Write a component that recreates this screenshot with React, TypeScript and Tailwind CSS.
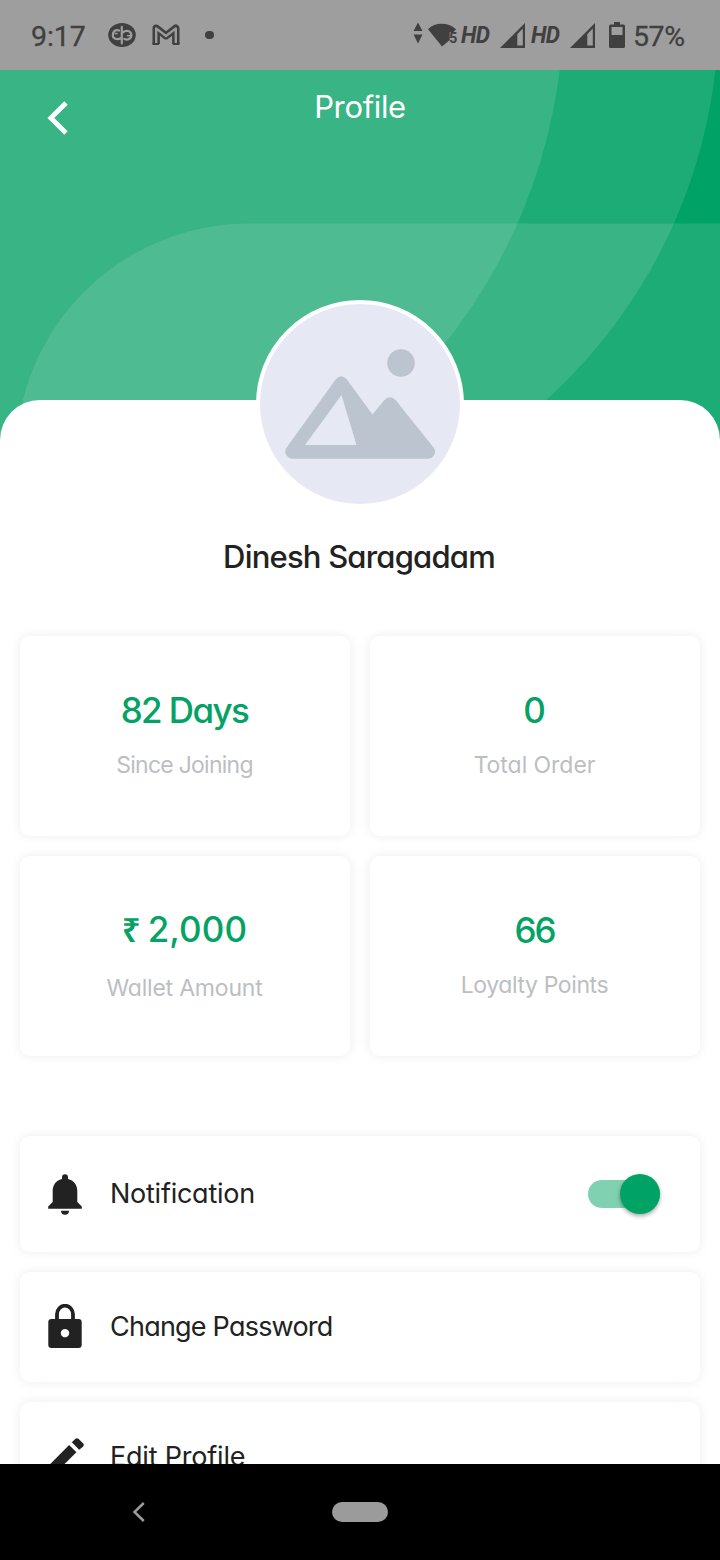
import type { ReactNode } from "react";

const FONT = "font-['Inter','Noto_Sans',sans-serif] [font-feature-settings:'cv11'_1,'calt'_0]";

function StatusBar() {
  return (
    <header className="flex h-[70px] shrink-0 items-center bg-[#9e9e9e] pl-[31px] pr-[35px] font-['Roboto',sans-serif] text-[#404040]">
      <span className="w-[77px] pt-[4px] text-[28.500px] leading-[66px] tracking-[-0.100px] [-webkit-text-stroke:0.300px_#404040]">9:17</span>
      <svg width="28" height="24" viewBox="0 0 28 24" aria-hidden="true">
        <ellipse cx="14" cy="12" rx="13.8" ry="12" fill="#404040" />
        <g fill="none" stroke="#9e9e9e" strokeWidth="2.200" strokeLinecap="round">
          <path d="M13.800 3.800V20.500" />
          <path d="M11 7.500C7.500 6.200 4.800 8.500 4.800 12c0 3.800 4 5.200 8 3.200" />
          <path d="M14.500 9.500C18.500 6.500 23 7.800 23.300 11.800c.2 4-3.600 5.600-7 4.200" />
          <path d="M19.500 12.800H22.500M7 10.500H9" strokeWidth="1.600" />
        </g>
      </svg>
      <svg className="ml-[15px]" width="30" height="24" viewBox="0 0 30 24" fill="none" aria-hidden="true">
        <path d="M5.200 21V5.200L15 12.800 24.800 5.200V21" stroke="#404040" strokeWidth="7.400" strokeLinejoin="round" />
        <path d="M1.500 19V21.500Q1.500 22 2.500 22H8V20M21.900 20V22H27.500Q28.500 22 28.500 21V19" fill="#404040" />
        <path d="M5.200 20V5.400L15 13 24.800 5.400V20" stroke="#9a9a9a" strokeWidth="2.400" strokeLinejoin="round" />
      </svg>
      <span className="ml-[24px] size-[8.500px] rounded-full bg-[#404040]" />
      <div className="ml-auto flex items-center">
        <svg width="44" height="28" viewBox="0 0 44 28" fill="#404040" aria-hidden="true">
          <path d="M5 1.500 9.500 10H.5ZM.5 13.500h9L5 22.500Z" />
          <path d="M15 8.200C22 1 35 1 43 8.200L40.500 11h-3.800v8L29 25.500Z" />
        </svg>
        <span className="-ml-[8px] mt-[8px] w-[10px] text-[14.500px] font-bold leading-[18px]">5</span>
        <span className="ml-[2px] w-[39px] origin-left scale-x-[0.940] text-[24px] font-bold italic leading-[28px] tracking-[-0.800px]">HD</span>
        <Signal />
        <span className="ml-[5px] w-[39px] origin-left scale-x-[0.940] text-[24px] font-bold italic leading-[28px] tracking-[-0.800px]">HD</span>
        <Signal />
        <svg className="ml-[13px]" width="16" height="26" viewBox="0 0 16 26" aria-hidden="true">
          <path d="M5 0h6v2.500h3.500Q16 2.500 16 4v20.500q0 1.500-1.500 1.500h-13Q0 26 0 24.500V4Q0 2.500 1.500 2.500H5Z" fill="#404040" />
          <path d="M2.500 5h11v8h-11Z" fill="#9e9e9e" />
        </svg>
        <span className="ml-[8px] w-[52px] pt-[4px] text-[28.500px] leading-[66px] tracking-[-0.400px] [-webkit-text-stroke:0.300px_#404040]">57%</span>
      </div>
    </header>
  );
}

function Signal() {
  return (
    <svg width="26" height="25" viewBox="0 0 26 25" aria-hidden="true">
      <path d="M25 0v25H0Z" fill="#404040" />
      <path d="M22.800 5.500v17h-5.500V11.200Z" fill="#9e9e9e" />
    </svg>
  );
}

function HeaderArt() {
  return (
    <svg className="absolute inset-x-0 top-0" width="720" height="370" viewBox="0 70 720 370" aria-hidden="true">
      <rect y="70" width="720" height="370" fill="#00a365" />
      <g fill="#eee" fillOpacity=".125">
        <circle cx="18" cy="3.500" r="545.800" />
        <path d="M0 70H715.500A525 525 0 0 1 510 430V440H0Z" />
        <path d="M720 223.500H249A233 233 0 0 0 16 456.500H720Z" />
      </g>
    </svg>
  );
}

function Avatar() {
  return (
    <div className="size-[208px] rounded-full border-4 border-white bg-[#e6e9f3]">
      <svg width="200" height="200" viewBox="260 304 200 200" aria-hidden="true">
        <circle cx="401" cy="363" r="13.800" fill="#bcc4cf" />
        <path
          d="M336 379Q341 373.500 346.500 379L372.500 414.500 384 400.500Q390 394 396 400.500L433.500 447.500Q437 452 433.500 456 431.500 458.700 428 458.700H292.500Q289 458.700 287 456 283.500 451.500 287 447ZM341.500 395 305 445H356.500Z"
          fill="#bcc4cf"
          fillRule="evenodd"
        />
      </svg>
    </div>
  );
}

function StatCard({ children, label, pad, gap, tracking }: { children: ReactNode; label: string; pad: string; gap: string; tracking: string }) {
  return (
    <div className={`flex h-[200px] flex-col items-center rounded-[10px] bg-white pr-[1px] shadow-[0_0_12px_rgba(0,0,0,0.08)] ${pad}`}>
      <div className="whitespace-nowrap text-[35px] font-medium leading-[44px] text-[#05a266]">{children}</div>
      <div className={`whitespace-nowrap text-[23px] leading-[30px] text-[#bcbec2] ${gap} ${tracking}`}>{label}</div>
    </div>
  );
}

function Row({ icon, label, height, tracking, children }: { icon: ReactNode; label: string; height: string; tracking: string; children?: ReactNode }) {
  return (
    <div className={`flex shrink-0 items-center rounded-[10px] bg-white pl-[26px] pr-[40px] shadow-[0_0_12px_rgba(0,0,0,0.08)] ${height}`}>
      {icon}
      <span className={`ml-[26px] whitespace-nowrap text-[27px] leading-[36px] text-[#222] ${tracking}`}>{label}</span>
      {children}
    </div>
  );
}

const bell = (
  <svg width="38" height="46" viewBox="46 1171 38 46" fill="#222" aria-hidden="true">
    <path d="M62 1179V1177.200a3 3 0 0 1 6 0V1179C74.500 1180.500 77.300 1185.500 77.300 1191V1202L81.800 1206.500V1208.800H48.200V1206.500L52.700 1202V1191C52.700 1185.500 55.500 1180.500 62 1179Z" />
    <path d="M61 1210.800h8a4 4 0 0 1-8 0Z" />
  </svg>
);

const lock = (
  <svg width="38" height="46" viewBox="46 1304 38 46" fill="#222" aria-hidden="true">
    <path d="M57 1321V1314.200a8 8.500 0 0 1 16 0V1321" fill="none" stroke="#222" strokeWidth="3.800" />
    <path
      d="M51.500 1319h27q3.200 0 3.200 3.200v22.500q0 3.200-3.200 3.200h-27q-3.200 0-3.200-3.200v-22.500q0-3.200 3.200-3.200ZM65 1328.900a4.200 4.200 0 1 0 .01 0Z"
      fillRule="evenodd"
    />
  </svg>
);

const pencil = (
  <svg width="38" height="46" viewBox="46 1434 38 46" fill="#222" aria-hidden="true">
    <path d="M69.100 1445 76.400 1452.300 54.500 1474H47.500V1466.800ZM71.800 1442.300 75.200 1439Q77 1437.500 78.700 1439L83 1443.300Q84.600 1445 83 1446.700L79.200 1449.700Z" />
  </svg>
);

export default function App() {
  return (
    <div className={`flex h-[1560px] w-[720px] flex-col overflow-hidden bg-white ${FONT}`}>
      <StatusBar />
      <main className="relative min-h-0 flex-1 overflow-hidden">
        <HeaderArt />
        <div className="relative grid h-[330px] grid-cols-[120px_1fr_120px] items-start text-white">
          <svg className="ml-[46px] mt-[30px]" width="24" height="36" viewBox="0 0 24 36" fill="none" aria-hidden="true">
            <path d="M20 3 4.800 18 20 33" stroke="#fff" strokeWidth="4.800" />
          </svg>
          <h1 className="mt-[17px] text-center text-[31px] leading-[40px] tracking-[-0.350px]">Profile</h1>
        </div>
        <section className="relative flex flex-col rounded-t-[40px] bg-white px-5">
          <div className="-mt-[100px] self-center">
            <Avatar />
          </div>
          <h2 className="mt-[29px] self-center whitespace-nowrap pr-[2px] text-[31px] font-medium leading-[40px] tracking-[-0.800px] text-[#222]">Dinesh Saragadam</h2>
          <div className="mt-[59px] grid grid-cols-2 gap-5">
            <StatCard label="Since Joining" pad="pt-[52px]" gap="mt-[18px]" tracking="tracking-[-0.750px]">
              <span className="tracking-[-1.600px]">82 Days</span>
            </StatCard>
            <StatCard label="Total Order" pad="pt-[52px]" gap="mt-[18px]" tracking="tracking-[-0.050px]">
              0
            </StatCard>
            <StatCard label="Wallet Amount" pad="pt-[51px]" gap="mt-[21px]" tracking="tracking-[-0.200px]">
              <span className="mr-[7px] font-['Noto_Sans',sans-serif] text-[33px] font-semibold">₹</span>
              <span className="tracking-[0.100px]">2,000</span>
            </StatCard>
            <StatCard label="Loyalty Points" pad="pt-[52px]" gap="mt-[18px]" tracking="tracking-[-0.400px]">
              <span className="tracking-[-2px]">66</span>
            </StatCard>
          </div>
          <div className="mt-20 flex flex-col gap-5">
            <Row icon={bell} label="Notification" height="h-[116px]" tracking="tracking-[-0.250px]">
              <button role="switch" aria-checked="true" aria-label="Notification" className="ml-auto flex h-[28px] w-[72px] items-center justify-end rounded-full bg-[#80d1b2]">
                <span className="size-[40px] shrink-0 rounded-full bg-[#00a365] shadow-[0_2px_4px_rgba(0,0,0,0.35)]" />
              </button>
            </Row>
            <Row icon={lock} label="Change Password" height="h-[110px]" tracking="tracking-[-0.780px]" />
            <Row icon={pencil} label="Edit Profile" height="h-[110px]" tracking="tracking-[-0.200px]" />
          </div>
        </section>
      </main>
      <nav className="flex h-24 shrink-0 items-center bg-black">
        <svg className="ml-[131px]" width="16" height="24" viewBox="0 0 16 24" fill="none" aria-hidden="true">
          <path d="M12.800 3 3.500 12 12.800 21" stroke="#9b9b9b" strokeWidth="2.500" />
        </svg>
        <span className="ml-[185px] h-5 w-14 rounded-full bg-[#9b9b9b]" />
      </nav>
    </div>
  );
}
